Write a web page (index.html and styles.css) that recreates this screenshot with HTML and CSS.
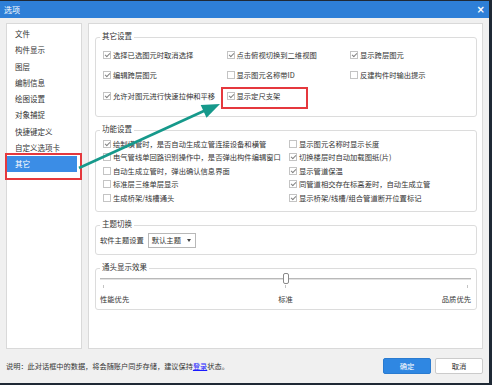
FILE: index.html
```html
<!DOCTYPE html>
<html lang="zh-CN">
<head>
  <meta charset="UTF-8" />
  <title>选项</title>
  <link rel="stylesheet" href="styles.css">
</head>
<body>
  <div class="dialog">
    <div class="titlebar">
      <span>选项</span>
      <span class="close">×</span>
    </div>

    <div class="main">
      <ul class="nav">
        <li>文件</li>
        <li>构件显示</li>
        <li>图层</li>
        <li>编制信息</li>
        <li>绘图设置</li>
        <li>对象捕捉</li>
        <li>快捷键定义</li>
        <li>自定义选项卡</li>
        <li class="active">其它</li>
      </ul>

      <div class="panel">
        <fieldset class="group">
          <legend>其它设置</legend>
          <div class="grid3">
            <label class="check on"><span class="box"></span>选择已选图元时取消选择</label>
            <label class="check on"><span class="box"></span>点击俯视切换到二维视图</label>
            <label class="check on"><span class="box"></span>显示跨层图元</label>
            <label class="check on"><span class="box"></span>编辑跨层图元</label>
            <label class="check"><span class="box"></span>显示图元名称带ID</label>
            <label class="check"><span class="box"></span>反建构件时输出提示</label>
            <label class="check on"><span class="box"></span>允许对图元进行快速拉伸和平移</label>
            <label class="check on mark"><span class="box"></span>显示定尺支架</label>
          </div>
        </fieldset>

        <fieldset class="group">
          <legend>功能设置</legend>
          <div class="grid2">
            <label class="check on"><span class="box"></span>绘制横管时，是否自动生成立管连接设备和横管</label>
            <label class="check"><span class="box"></span>显示图元名称时显示长度</label>
            <label class="check"><span class="box"></span>电气管线单回路识别操作中，是否弹出构件编辑窗口</label>
            <label class="check on"><span class="box"></span>切换楼层时自动加载图纸(片)</label>
            <label class="check"><span class="box"></span>自动生成立管时，弹出确认信息界面</label>
            <label class="check on"><span class="box"></span>显示管道保温</label>
            <label class="check"><span class="box"></span>标准层三维单层显示</label>
            <label class="check on"><span class="box"></span>同管道相交存在标高差时，自动生成立管</label>
            <label class="check"><span class="box"></span>生成桥架/线槽通头</label>
            <label class="check on"><span class="box"></span>显示桥架/线槽/组合管道断开位置标记</label>
          </div>
        </fieldset>

        <fieldset class="group">
          <legend>主题切换</legend>
          <div class="theme-row">
            <span>软件主题设置</span>
            <div class="combo"><span>默认主题</span><span class="caret"></span></div>
          </div>
        </fieldset>

        <fieldset class="group">
          <legend>通头显示效果</legend>
          <div class="slider">
            <div class="track"></div>
            <div class="thumb"></div>
          </div>
          <div class="ticks"><span></span><span></span><span></span></div>
          <div class="slider-labels">
            <span>性能优先</span>
            <span>标准</span>
            <span>品质优先</span>
          </div>
        </fieldset>
      </div>
    </div>

    <div class="footer">
      <span class="note">说明：此对话框中的数据，将会随账户同步存储，建议保持<a href="#">登录</a>状态。</span>
      <button class="btn ok">确定</button>
      <button class="btn cancel">取消</button>
    </div>
  </div>

  <svg class="arrow" width="492" height="385" viewBox="0 0 492 385">
    <line x1="79" y1="168" x2="206" y2="110" stroke="#16998b" stroke-width="2.6" />
    <polygon points="220,104 206.5,117.8 200.7,105" fill="#16998b" />
  </svg>
</body>
</html>
```

FILE: styles.css
```css
* {
  box-sizing: border-box;
}

body {
  position: relative;
  margin: 0;
  width: 492px;
  height: 385px;
  overflow: hidden;
  background: #1f2935;
  font-family: "Noto Sans CJK SC", "Liberation Sans", sans-serif;
  font-size: 7.3px;
  color: #333;
}

.dialog {
  width: 489px;
  height: 382px;
  margin-top: 1px;
  background: #f0f0f0;
  display: flex;
  flex-direction: column;
}

.titlebar {
  height: 17px;
  flex: none;
  background: #2e7fd7;
  color: #fff;
  font-size: 8px;
  display: flex;
  align-items: center;
  justify-content: space-between;
  padding: 0 4px;
}

.close {
  font-family: "DejaVu Sans", sans-serif;
  font-size: 10px;
  font-weight: bold;
}

.main {
  height: 331px;
  flex: none;
  display: flex;
  gap: 6px;
  padding: 5px 6px 0;
}

/* left menu */
.nav {
  width: 76px;
  height: 326px;
  margin: 0;
  padding: 2px 4px 0 0;
  list-style: none;
  background: #fff;
  border: 1px solid #d9d9d9;
}

.nav li {
  height: 16.25px;
  line-height: 16.25px;
  padding-left: 8px;
  font-size: 7.5px;
}

.nav li.active {
  position: relative;
  background: #3b8de6;
  color: #fff;
}

.nav li.active::after {
  content: '';
  position: absolute;
  left: -2px;
  top: -3px;
  width: 73px;
  height: 23px;
  border: 2px solid #e5383d;
}

/* settings panel */
.panel {
  flex: 1;
  height: 326px;
  background: #fff;
  border: 1px solid #d9d9d9;
  padding-top: 6.5px;
}

.group {
  margin: 0 5px 0 6px;
  padding: 0;
  min-width: 0;
  border: 1px solid #dcdcdc;
  border-radius: 3px;
}

.group + .group {
  margin-top: 7px;
}

.group legend {
  margin-left: 4px;
  padding: 0 2px 3px;
  line-height: 10px;
  font-size: 7.5px;
}

.grid3 {
  display: grid;
  grid-template-columns: 123.5px 123.5px 1fr;
  grid-auto-rows: 20.5px;
  padding: 1px 0 10px 7px;
}

.grid2 {
  display: grid;
  grid-template-columns: 186px 1fr;
  grid-auto-rows: 13.5px;
  padding: 0 0 6px 7px;
}

.check {
  display: flex;
  align-items: center;
  gap: 2px;
  white-space: nowrap;
}

.box {
  position: relative;
  flex: none;
  width: 8px;
  height: 8px;
  border: 1px solid #c4c4c4;
  background: #fff;
}

.check.on .box::after {
  content: '';
  position: absolute;
  left: 2px;
  top: 0;
  width: 2px;
  height: 4px;
  border: solid #858585;
  border-width: 0 1px 1px 0;
  transform: rotate(45deg);
}

.check.mark {
  position: relative;
}

.check.mark::after {
  content: '';
  position: absolute;
  left: -6px;
  top: 1px;
  width: 83px;
  height: 18px;
  border: 2px solid #e5383d;
}

.theme-row {
  display: flex;
  align-items: center;
  gap: 4px;
  padding: 1px 0 6px 4px;
}

.combo {
  width: 48px;
  height: 15px;
  border: 1px solid #b8b8b8;
  background: #fff;
  display: flex;
  align-items: center;
  justify-content: space-between;
  padding: 0 4px 0 3px;
}

.caret {
  width: 0;
  height: 0;
  border-left: 2px solid transparent;
  border-right: 2px solid transparent;
  border-top: 3px solid #444;
}

.slider {
  position: relative;
  height: 12px;
  margin: -2px 5px 0 4px;
  padding-top: 5px;
}

.track {
  height: 2px;
  background: #e2e2e2;
  border-top: 1px solid #b9b9b9;
}

.thumb {
  position: absolute;
  left: 50%;
  top: 0;
  width: 6px;
  height: 11px;
  margin-left: -3px;
  background: #fff;
  border: 1px solid #8a8a8a;
  border-radius: 2px;
}

.ticks {
  display: flex;
  justify-content: space-between;
  margin: 0 5px 0 4px;
  padding: 0 3px;
  height: 4px;
}

.ticks span {
  width: 1px;
  height: 3px;
  background: #c4c4c4;
}

.slider-labels {
  display: flex;
  justify-content: space-between;
  margin: 5.5px 5px 0 4px;
  padding-bottom: 5px;
  line-height: 10px;
}

/* bottom bar */
.footer {
  flex: 1;
  display: flex;
  align-items: center;
  gap: 4px;
  padding: 0 6px;
}

.note {
  flex: 1;
  font-size: 7.2px;
}

.note a {
  color: #1a1aff;
}

.btn {
  width: 48px;
  height: 16px;
  padding: 0;
  font-family: inherit;
  font-size: 7.3px;
  border-radius: 2px;
}

.ok {
  background: #2f87e2;
  border: 1px solid #2a7bd0;
  color: #fff;
}

.cancel {
  background: #fff;
  border: 1px solid #cbcbcb;
  color: #333;
}

.arrow {
  position: absolute;
  left: 0;
  top: 0;
  pointer-events: none;
}
```
